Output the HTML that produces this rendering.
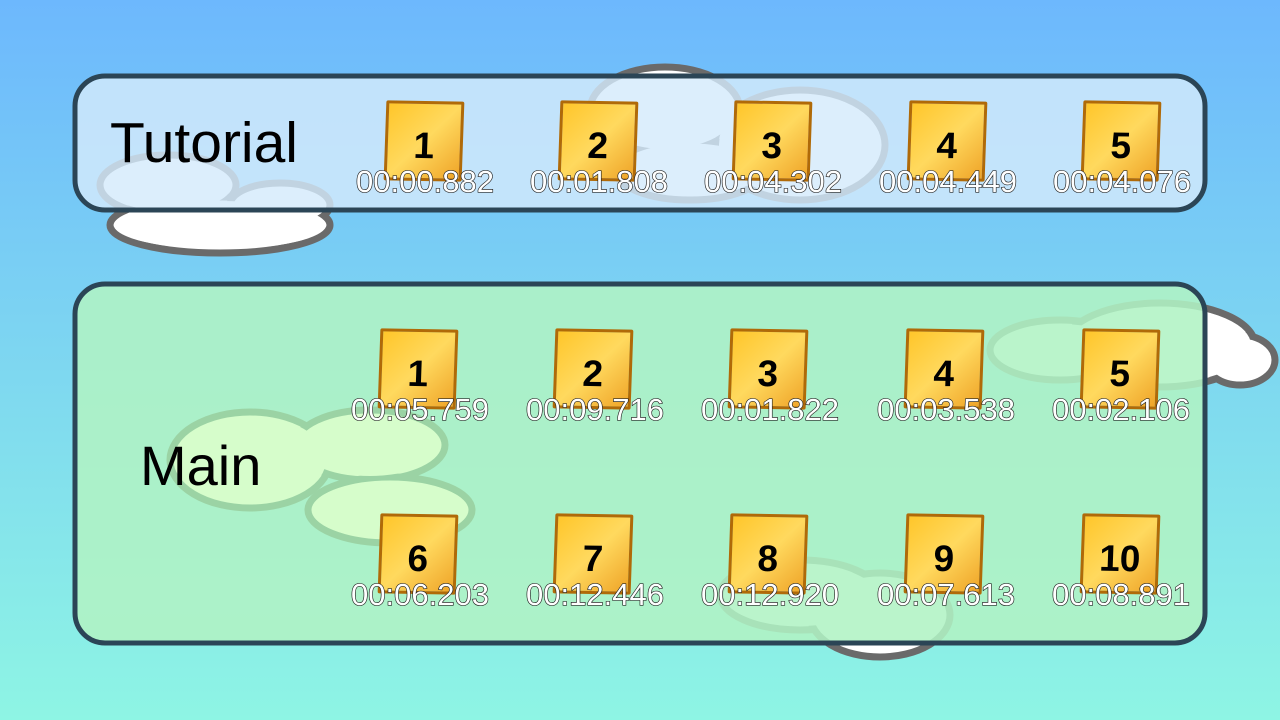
<!DOCTYPE html>
<html><head><style>
body{margin:0;width:1280px;height:720px;overflow:hidden;background:linear-gradient(#6db8fd,#8ef5e4);font-family:"Liberation Sans",sans-serif;position:relative}
svg{position:absolute;left:0;top:0}
.lbl{position:absolute;color:#000}
.tile{position:absolute;width:78px;height:80px;border:3px solid #b06a08;border-radius:2px;background:linear-gradient(135deg,#ffc62a 0%,#ffd95e 50%,#efa428 100%);transform:skewX(-1deg) rotate(1deg);box-sizing:border-box;text-align:center;font-weight:bold;font-size:37px;line-height:84px;color:#000}
.time{position:absolute;width:200px;text-align:center;font-size:31px;color:#fff;-webkit-text-stroke:1.3px #222;paint-order:stroke fill}
</style></head><body>
<svg width="1280" height="720">
<g stroke="#6a6a6a" stroke-width="7" fill="#fff">
<g><ellipse cx="168" cy="185" rx="68" ry="30"/><ellipse cx="220" cy="225" rx="110" ry="28"/><ellipse cx="280" cy="205" rx="50" ry="22"/></g>
<g><ellipse cx="665" cy="110" rx="75" ry="43"/><ellipse cx="800" cy="145" rx="85" ry="55"/><ellipse cx="690" cy="170" rx="75" ry="30"/></g>
<g><ellipse cx="1060" cy="350" rx="70" ry="30"/><ellipse cx="1160" cy="345" rx="95" ry="42"/><ellipse cx="1240" cy="360" rx="35" ry="25"/></g>
<g><ellipse cx="800" cy="595" rx="80" ry="35"/><ellipse cx="880" cy="615" rx="70" ry="42"/></g>
</g>
<g fill="#fff"><ellipse cx="168" cy="185" rx="64" ry="26"/><ellipse cx="220" cy="225" rx="106" ry="24"/><ellipse cx="280" cy="205" rx="46" ry="18"/>
<ellipse cx="665" cy="110" rx="71" ry="39"/><ellipse cx="800" cy="145" rx="81" ry="51"/><ellipse cx="690" cy="170" rx="71" ry="26"/>
<ellipse cx="1060" cy="350" rx="66" ry="26"/><ellipse cx="1160" cy="345" rx="91" ry="38"/><ellipse cx="1240" cy="360" rx="31" ry="21"/>
<ellipse cx="800" cy="595" rx="76" ry="31"/><ellipse cx="880" cy="615" rx="66" ry="38"/></g>
<rect x="75" y="76" width="1130" height="134" rx="30" fill="#d4eafb" fill-opacity="0.82" stroke="#2b4556" stroke-width="5"/>
<rect x="75" y="284" width="1130" height="359" rx="30" fill="#b0f2c4" fill-opacity="0.88" stroke="#2b4556" stroke-width="5"/>
<g stroke="#9bd3a4" stroke-width="7" fill="#d6fdcb">
<ellipse cx="250" cy="460" rx="80" ry="48"/><ellipse cx="370" cy="445" rx="75" ry="35"/><ellipse cx="390" cy="510" rx="82" ry="33"/></g>
<g fill="#d6fdcb"><ellipse cx="250" cy="460" rx="76" ry="44"/><ellipse cx="370" cy="445" rx="71" ry="31"/><ellipse cx="390" cy="510" rx="78" ry="29"/></g>
</svg>
<div class="lbl" style="left:110px;top:110px;font-size:57px">Tutorial</div>
<div class="lbl" style="left:140px;top:433px;font-size:56px">Main</div>

<div class="tile" style="left:385px;top:101px">1</div><div class="time" style="left:325px;top:164px">00:00.882</div>
<div class="tile" style="left:559px;top:101px">2</div><div class="time" style="left:499px;top:164px">00:01.808</div>
<div class="tile" style="left:733px;top:101px">3</div><div class="time" style="left:673px;top:164px">00:04.302</div>
<div class="tile" style="left:908px;top:101px">4</div><div class="time" style="left:848px;top:164px">00:04.449</div>
<div class="tile" style="left:1082px;top:101px">5</div><div class="time" style="left:1022px;top:164px">00:04.076</div>

<div class="tile" style="left:379px;top:329px">1</div><div class="time" style="left:320px;top:392px">00:05.759</div>
<div class="tile" style="left:554px;top:329px">2</div><div class="time" style="left:495px;top:392px">00:09.716</div>
<div class="tile" style="left:729px;top:329px">3</div><div class="time" style="left:670px;top:392px">00:01.822</div>
<div class="tile" style="left:905px;top:329px">4</div><div class="time" style="left:846px;top:392px">00:03.538</div>
<div class="tile" style="left:1081px;top:329px">5</div><div class="time" style="left:1021px;top:392px">00:02.106</div>

<div class="tile" style="left:379px;top:514px">6</div><div class="time" style="left:320px;top:577px">00:06.203</div>
<div class="tile" style="left:554px;top:514px">7</div><div class="time" style="left:495px;top:577px">00:12.446</div>
<div class="tile" style="left:729px;top:514px">8</div><div class="time" style="left:670px;top:577px">00:12.920</div>
<div class="tile" style="left:905px;top:514px">9</div><div class="time" style="left:846px;top:577px">00:07.613</div>
<div class="tile" style="left:1081px;top:514px">10</div><div class="time" style="left:1021px;top:577px">00:08.891</div>
</body></html>
